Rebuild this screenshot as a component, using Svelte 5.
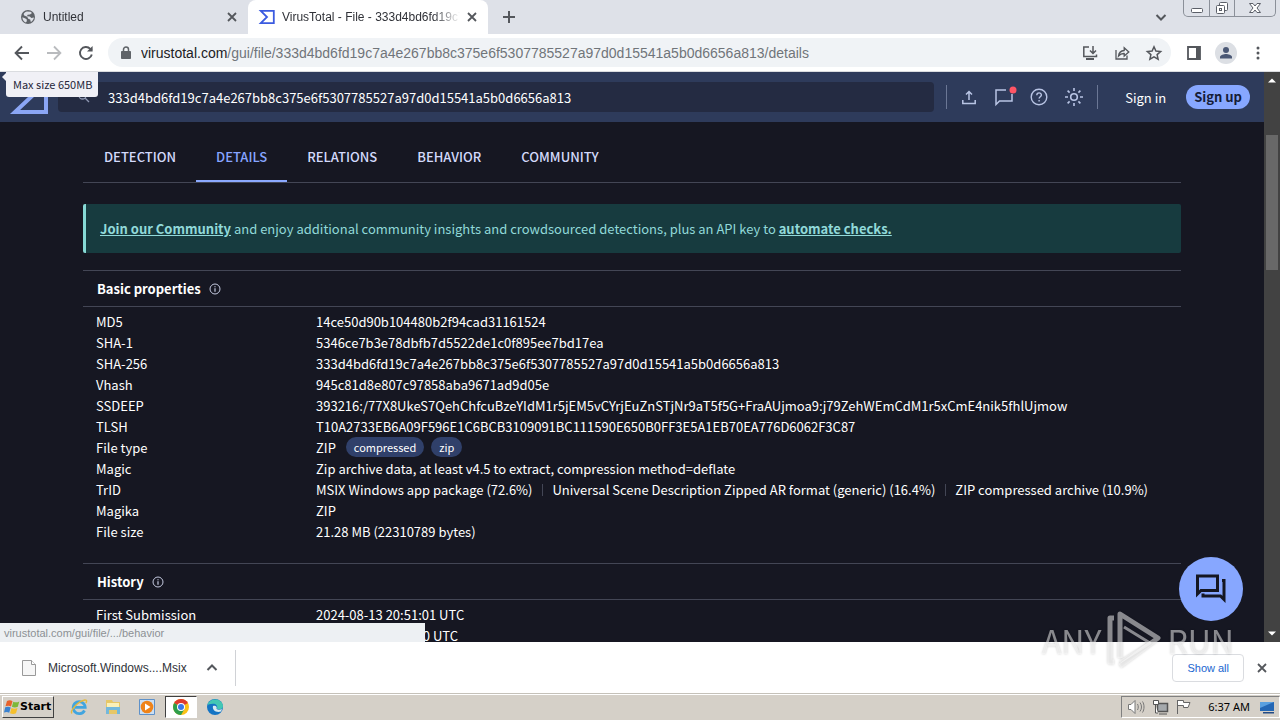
<script lang="ts">
    interface Property {
        label: string
        value?: string
        tags?: string[]
        parts?: string[]
    }

    const hash = '333d4bd6fd19c7a4e267bb8c375e6f5307785527a97d0d15541a5b0d6656a813'
    const sections = ['Detection', 'Details', 'Relations', 'Behavior', 'Community']

    const basic: Property[] = [
        { label: 'MD5', value: '14ce50d90b104480b2f94cad31161524' },
        { label: 'SHA-1', value: '5346ce7b3e78dbfb7d5522de1c0f895ee7bd17ea' },
        { label: 'SHA-256', value: hash },
        { label: 'Vhash', value: '945c81d8e807c97858aba9671ad9d05e' },
        {
            label: 'SSDEEP',
            value: '393216:/77X8UkeS7QehChfcuBzeYIdM1r5jEM5vCYrjEuZnSTjNr9aT5f5G+FraAUjmoa9:j79ZehWEmCdM1r5xCmE4nik5fhlUjmow',
        },
        { label: 'TLSH', value: 'T10A2733EB6A09F596E1C6BCB3109091BC111590E650B0FF3E5A1EB70EA776D6062F3C87' },
        { label: 'File type', value: 'ZIP', tags: ['compressed', 'zip'] },
        { label: 'Magic', value: 'Zip archive data, at least v4.5 to extract, compression method=deflate' },
        {
            label: 'TrID',
            parts: [
                'MSIX Windows app package (72.6%)',
                'Universal Scene Description Zipped AR format (generic) (16.4%)',
                'ZIP compressed archive (10.9%)',
            ],
        },
        { label: 'Magika', value: 'ZIP' },
        { label: 'File size', value: '21.28 MB (22310789 bytes)' },
    ]

    let active = $state('Details')
    let query = $state(hash)
</script>

{#snippet cross()}
    <svg width="10" height="10" viewBox="0 0 10 10" fill="none" stroke="currentColor" stroke-width="1.8">
        <path d="M1 1l8 8M9 1l-8 8" />
    </svg>
{/snippet}

{#snippet info()}
    <svg width="12" height="12" viewBox="0 0 12 12" fill="none" stroke="#c5cae0">
        <circle cx="6" cy="6" r="5" />
        <path d="M6 5.2v3.5M6 3.2v1.1" stroke-width="1.2" />
    </svg>
{/snippet}

<div class="window">
    <div class="tabstrip">
        <div class="tab">
            <svg width="16" height="16" viewBox="0 0 16 16">
                <circle cx="8" cy="8" r="7" fill="#5f6368" />
                <path d="M2.4 8.2l3 1.2 1.4 1v1.8l-1 1.4C3.8 12.7 2.3 10.6 2.4 8.2zM7 2.5l3.5.2 1.500 1.300-2 1.600-2.400.2-.6 1.500 2.800.2 1.600 1.500 2.600-.6c-.3 1.800-1.500 3.600-3.200 4.500l-.6-2.300-2-.8-1-2-3-1.200-.6-1.600C4.500 3.500 5.600 2.800 7 2.500z" fill="#dee1e8" />
            </svg>
            <span class="tab__title">Untitled</span>
            <button class="icon" aria-label="Close tab">{@render cross()}</button>
        </div>
        <div class="tab tab--active">
            <svg width="16" height="16" viewBox="0 0 16 16" fill="none" stroke="#3b5be0" stroke-width="1.8">
                <path d="M1.8 1.9h13v12.2h-13L8 8z" />
            </svg>
            <span class="tab__title">VirusTotal - File - 333d4bd6fd19c7a4</span>
            <button class="icon" aria-label="Close tab">{@render cross()}</button>
        </div>
        <button class="icon new-tab" aria-label="New tab">
            <svg width="14" height="14" viewBox="0 0 14 14" stroke="currentColor" stroke-width="2">
                <path d="M7 1v12M1 7h12" />
            </svg>
        </button>
        <button class="icon search-tabs" aria-label="Search tabs">
            <svg width="12" height="12" viewBox="0 0 12 12" fill="none" stroke="currentColor" stroke-width="2">
                <path d="M1.5 4L6 8.5 10.5 4" />
            </svg>
        </button>
        <div class="controls">
            <button aria-label="Minimize">
                <svg width="14" height="14" viewBox="0 0 14 14" fill="#fff" stroke="#5b5f68"><rect x="1.5" y="7.5" width="11" height="4" rx="1" /></svg>
            </button>
            <button aria-label="Restore">
                <svg width="14" height="14" viewBox="0 0 14 14" fill="#fff" stroke="#5b5f68"><rect x="4.5" y="1.5" width="8" height="8" rx="1" /><rect x="1.5" y="4.5" width="8" height="8" rx="1" /><rect x="4.5" y="7.5" width="2" height="2" /></svg>
            </button>
            <button class="controls__close" aria-label="Close">
                <svg width="14" height="14" viewBox="0 0 14 14" fill="#fff" stroke="#5b5f68"><path d="M1.5 2.500H5L7 5l2-2.500h3.500L9 7l3.500 4.500H9L7 9l-2 2.500H1.500L5 7z" /></svg>
            </button>
        </div>
    </div>

    <div class="toolbar">
        <button class="icon" aria-label="Back">
            <svg width="16" height="16" viewBox="0 0 16 16" fill="none" stroke="currentColor" stroke-width="1.9"><path d="M15 8H2M8 1.5L1.6 8 8 14.5" /></svg>
        </button>
        <button class="icon icon--off" aria-label="Forward">
            <svg width="16" height="16" viewBox="0 0 16 16" fill="none" stroke="currentColor" stroke-width="1.8"><path d="M1 8h13M8 1.5L14.4 8 8 14.5" /></svg>
        </button>
        <button class="icon" aria-label="Reload">
            <svg width="16" height="16" viewBox="0 0 16 16" fill="none" stroke="currentColor" stroke-width="1.9"><path d="M13.8 9.5A6 6 0 1 1 12.3 3.8l1.5 1.5" /><path d="M14.6 1v5.5H9z" fill="currentColor" stroke="none" /></svg>
        </button>
        <div class="omnibox">
            <svg width="12" height="14" viewBox="0 0 12 14"><path d="M1.5 5.5h9v7h-9z" fill="#5f6368" stroke="#5f6368" stroke-linejoin="round" /><path d="M3.5 6V3.500a2.500 2.500 0 0 1 5 0V6" fill="none" stroke="#5f6368" stroke-width="1.5" /></svg>
            <span class="omnibox__url"><b>virustotal.com</b>/gui/file/{hash}/details</span>
            <button class="icon" aria-label="Install">
                <svg width="16" height="16" viewBox="0 0 16 16" fill="none" stroke="currentColor" stroke-width="1.5"><path d="M7 2H1.8v9.5h12.7V9.5M11 1v7M8 5.5l3 3 3-3" /><path d="M4 14h8" stroke-width="2" /></svg>
            </button>
            <button class="icon" aria-label="Share">
                <svg width="16" height="16" viewBox="0 0 16 16" fill="none" stroke="currentColor" stroke-width="1.3"><path d="M2 5v9h11v-3.5" /><path d="M4.500 11c.4-3.400 2.300-5.200 5.700-5.500V2.800L14.800 7l-4.600 4V8.500C7.800 8.400 6 9.200 4.500 11z" /></svg>
            </button>
            <button class="icon" aria-label="Bookmark">
                <svg width="16" height="16" viewBox="0 0 16 16" fill="none" stroke="currentColor" stroke-width="1.5"><path d="M8 1.8l1.9 4.3 4.7.4-3.5 3.1 1 4.6L8 11.8l-4.100 2.400 1-4.600L1.400 6.500l4.700-.4z" /></svg>
            </button>
        </div>
        <div class="toolbar__end">
            <button class="icon" aria-label="Side panel">
                <svg width="16" height="16" viewBox="0 0 16 16"><path d="M2 2h12v12H2z" fill="none" stroke="currentColor" stroke-width="1.8" /><path d="M10 2h4v12h-4z" fill="currentColor" /></svg>
            </button>
            <button class="icon" aria-label="Profile">
                <svg width="22" height="22" viewBox="0 0 22 22"><circle cx="11" cy="11" r="11" fill="#dcdfe4" /><circle cx="11" cy="8" r="3" fill="#4b5875" /><path d="M5 16.5v-1.500c0-2 4-3 6-3s6 1 6 3v1.500z" fill="#4b5875" /></svg>
            </button>
            <button class="icon" aria-label="Menu">
                <svg width="16" height="16" viewBox="0 0 16 16" fill="currentColor"><circle cx="8" cy="3" r="1.5" /><circle cx="8" cy="8" r="1.5" /><circle cx="8" cy="13" r="1.5" /></svg>
            </button>
        </div>
    </div>

    <div class="viewport">
        <div class="page">
            <header class="header">
                <a class="logo" href="/" aria-label="VirusTotal">
                    <svg width="40" height="34" viewBox="0 0 40 34" fill="none" stroke="#8ba6f5" stroke-width="4"><path d="M6 2h31v30H6l16-15z" /></svg>
                </a>
                <div class="search">
                    <svg width="12" height="12" viewBox="0 0 12 12" fill="none" stroke="#8f98b3" stroke-width="1.3"><circle cx="4.5" cy="4.5" r="3.5" /><path d="M7 7l4 4" /></svg>
                    <input type="text" aria-label="Search" bind:value={query} />
                </div>
                <div class="actions">
                    <button class="icon" aria-label="Upload">
                        <svg width="20" height="20" viewBox="0 0 20 20" fill="none" stroke="currentColor" stroke-width="1.5"><path d="M10 13V5M7 7.500L10 4.500 13 7.500M3.800 13v3.500h12.400V13" /></svg>
                    </button>
                    <button class="icon" aria-label="Notifications">
                        <svg width="20" height="20" viewBox="0 0 20 20" fill="none" stroke="currentColor" stroke-width="1.5"><path d="M12 3H2v14.500L5.500 14H18V7" /><circle cx="19" cy="3" r="3.5" fill="#ff5565" stroke="none" /></svg>
                    </button>
                    <button class="icon" aria-label="Help">
                        <svg width="20" height="20" viewBox="0 0 20 20" fill="none" stroke="currentColor" stroke-width="1.4"><circle cx="10" cy="10" r="7.8" /><path d="M7.800 8.200c0-3 4.600-3 4.600-.2 0 1.700-2.300 1.800-2.300 3.500M10.100 13v1.500" /></svg>
                    </button>
                    <button class="icon" aria-label="Theme">
                        <svg width="20" height="20" viewBox="0 0 20 20" fill="none" stroke="currentColor" stroke-width="1.6"><circle cx="10" cy="10" r="3.3" /><path d="M10 1v3M10 16v3M1 10h3M16 10h3M3.600 3.600l2 2M14.400 14.400l2 2M16.400 3.600l-2 2M5.600 14.400l-2 2" /></svg>
                    </button>
                </div>
                <a class="sign-in" href="/sign-in">Sign in</a>
                <a class="sign-up" href="/sign-up">Sign up</a>
            </header>

            <main class="content">
                <nav class="sections">
                    {#each sections as section}
                        <button class="section" class:section--active={section === active} onclick={() => (active = section)}>
                            {section}
                        </button>
                    {/each}
                </nav>

                <p class="banner">
                    <a href="/join">Join our Community</a> and enjoy additional community insights and crowdsourced detections, plus an API key to
                    <a href="/api">automate checks.</a>
                </p>

                <section class="card">
                    <h2>Basic properties {@render info()}</h2>
                    <table>
                        <tbody>
                            {#each basic as row}
                                <tr>
                                    <th scope="row">{row.label}</th>
                                    <td>
                                        {row.value ?? ''}
                                        {#each row.tags ?? [] as tag}<span class="tag">{tag}</span>{/each}
                                        {#each row.parts ?? [] as part}<span class="part">{part}</span>{/each}
                                    </td>
                                </tr>
                            {/each}
                        </tbody>
                    </table>
                </section>

                <section class="card">
                    <h2>History {@render info()}</h2>
                    <table>
                        <tbody>
                            <tr>
                                <th scope="row">First Submission</th>
                                <td>2024-08-13 20:51:01 UTC</td>
                            </tr>
                            <tr>
                                <th></th>
                                <td><span class="tail">0 UTC</span></td>
                            </tr>
                        </tbody>
                    </table>
                </section>
            </main>
        </div>

        <div class="scrollbar">
            <svg width="16" height="16" viewBox="0 0 16 16" fill="#fff"><path d="M4 10.5L8 6.500l4 4z" /></svg>
            <div class="scrollbar__track"><div class="scrollbar__thumb"></div></div>
            <svg width="16" height="16" viewBox="0 0 16 16" fill="#fff"><path d="M4 5.500L8 9.500l4-4z" /></svg>
        </div>

        <div class="tooltip">Max size 650MB</div>
        <div class="status">virustotal.com/gui/file/.../behavior</div>
        <button class="chat" aria-label="Chat">
            <svg width="32" height="32" viewBox="0 0 32 32" fill="none" stroke="#151722" stroke-width="3"><path d="M2.5 3h20v14.500H6L2.500 21z" /><path d="M27 7.500h2v19L25.500 23H8v-2.500" /></svg>
        </button>
    </div>

    <div class="downloads">
        <button class="download">
            <svg width="14" height="18" viewBox="0 0 14 18" fill="#f6f6f6" stroke="#999"><path d="M.5 1.5h9l4 4v11H.5z" /><path d="M9.5 1.5v4h4" fill="#fff" /></svg>
            <span>Microsoft.Windows....Msix</span>
        </button>
        <button class="icon download-menu" aria-label="Download options">
            <svg width="12" height="12" viewBox="0 0 12 12" fill="none" stroke="currentColor" stroke-width="2"><path d="M1.5 8L6 3.5 10.5 8" /></svg>
        </button>
        <button class="show-all">Show all</button>
        <button class="icon" aria-label="Close downloads">{@render cross()}</button>
    </div>

    <div class="taskbar">
        <button class="start">
            <svg width="16" height="16" viewBox="0 0 16 16"><path d="M3 2c2-1 4-.8 5.500.2L7 7.500C5.500 6.500 3.500 6.500 1.500 7.300z" fill="#e8622c" /><path d="M9.300 2.700c2 1 4 .8 6-.2l-1.500 5.300c-2 1-4 .9-5.900 0z" fill="#7db83a" /><path d="M1.200 8.300c2-.8 4-.8 5.500.2l-1.500 5.300c-1.500-1-3.400-1-5.200-.2z" fill="#3b82d0" /><path d="M7.500 9c2 1 4 .9 6 0L12 14.200c-2 1-4 .8-6 0z" fill="#f5bf2c" /></svg>
            Start
        </button>
        <div class="launchers">
            <button aria-label="Internet Explorer">
                <svg width="18" height="18" viewBox="0 0 18 18" fill="none"><path d="M14.5 12.5a6 6 0 1 1 .7-3.200H5" stroke="#42a5df" stroke-width="2.8" /><path d="M2 15.500C-.5 13 8 3 15 2c2.500 0 1.500 2 .8 3" stroke="#e5b93c" stroke-width="1.4" /></svg>
            </button>
            <button aria-label="Explorer">
                <svg width="18" height="18" viewBox="0 0 18 18"><path d="M2 2h6l1 2h7v12H2z" fill="#e6c768" /><path d="M3 5h12v5H3z" fill="#faf0b8" /><path d="M2 9h14v7h-3v-4H5v4H2z" fill="#73b8dc" /></svg>
            </button>
            <button aria-label="Media Player">
                <svg width="18" height="18" viewBox="0 0 18 18"><path d="M1.5 1.5h15v15h-15z" fill="#cbdff3" stroke="#5e91c9" /><circle cx="9" cy="9" r="6.3" fill="#ef8318" /><path d="M7 5.500L12.500 9 7 12.500z" fill="#fff" /></svg>
            </button>
            <button class="launchers__active" aria-label="Chrome">
                <svg width="18" height="18" viewBox="0 0 18 18"><circle cx="9" cy="9" r="8" fill="#fbc116" /><path d="M9 9L2.100 5A8 8 0 0 1 15.900 5z" fill="#df3b2e" /><path d="M9 9L2.100 5A8 8 0 0 0 9 17l3.500-6z" fill="#2f9e4b" /><circle cx="9" cy="9" r="4" fill="#fff" /><circle cx="9" cy="9" r="3" fill="#3b78e7" /></svg>
            </button>
            <button aria-label="Edge">
                <svg width="18" height="18" viewBox="0 0 18 18"><circle cx="9" cy="9" r="8" fill="#1474c4" /><path d="M1.500 7C3 0 15-1 17 7.500c.4 4-4 4.500-6 3.200 1-3-1-5-4-5S2 6.500 1.500 7z" fill="#43c7b4" /><path d="M7 8c-1 4 3 7 8 5.500l1-2.500c-2 1-4.500.8-5.500-.3.800-1.700-.5-3.700-3.500-2.700z" fill="#d9eaf0" /></svg>
            </button>
        </div>
        <div class="tray">
            <svg width="18" height="18" viewBox="0 0 18 18" fill="#fff" stroke="#777"><path d="M1.5 6.5H4l4-4v13l-4-4H1.500z" /><path d="M10.500 6c1 2 1 4 0 6M13 4.500c2 3 2 6 0 9M15.500 3.500c2 3 2 8 0 11" fill="none" /></svg>
            <svg width="18" height="18" viewBox="0 0 18 18" fill="#fff" stroke="#555"><path d="M6.5 5.5h10v8h-10z" fill="#a5a9ac" stroke-width="1.5" /><path d="M8 16h8M2.500 2.500h5v4h-5zM4.500 7v8H7" /></svg>
            <svg width="18" height="18" viewBox="0 0 18 18" fill="#fff" stroke="#666"><path d="M2.5 2v14M2.500 2.500h6v2h6.500l-2 5H8.500v-2h-6z" /></svg>
            <time>6:37 AM</time>
            <svg width="16" height="16" viewBox="0 0 16 16"><path d="M1 3h14v9H1z" fill="#2467b5" /><path d="M1 3h14L1 9z" fill="#5aa0e0" /><path d="M4 13h11v1.500H4z" fill="#234b85" /></svg>
        </div>
    </div>

    <div class="watermark" aria-hidden="true">
        <span>ANY</span>
        <svg width="56" height="60" viewBox="0 0 56 60" fill="none" stroke="currentColor" stroke-width="5" stroke-linejoin="round"><path d="M8 8H4v44h4M14 48V4l38 24-38 28" /><path d="M18 17l26 16-30 19" stroke-width="3" /></svg>
        <span>RUN</span>
    </div>
</div>

<style>
    :global(body) {
        margin: 0;
    }

    .window {
        --sans: 'Noto Sans CJK SC', 'Noto Sans', sans-serif;
        --line: #434655;
        position: relative;
        display: flex;
        flex-direction: column;
        height: 100vh;
        overflow: hidden;
        font: 12px/16px 'Liberation Sans', sans-serif;
        color: #303238;
    }

    button {
        padding: 0;
        border: 0;
        background: none;
        font: inherit;
        color: inherit;
    }

    a {
        color: inherit;
        text-decoration: none;
    }

    svg {
        display: block;
        flex: none;
        overflow: visible;
    }

    .icon {
        display: flex;
        flex: none;
        color: #54575c;
    }

    .icon--off {
        color: #b9bbbe;
    }

    .tabstrip {
        display: flex;
        flex: none;
        height: 34px;
        align-items: center;
        background: #dee1e8;
    }

    .tab {
        display: flex;
        box-sizing: border-box;
        width: 240px;
        height: 34px;
        padding: 0 11px;
        align-items: center;
        gap: 7px;
    }

    .tab:first-child {
        width: 248px;
        padding-left: 20px;
    }

    .tab--active {
        border-radius: 8px 8px 0 0;
        background: #fff;
    }

    .tab__title {
        flex: 1;
        overflow: hidden;
        white-space: nowrap;
        mask-image: linear-gradient(to right, #000 85%, transparent);
    }

    .new-tab {
        margin-left: 14px;
    }

    .search-tabs {
        margin: 0 16px 0 auto;
    }

    .controls {
        display: flex;
        align-self: flex-start;
        height: 16px;
        margin-right: 4px;
        border: 1px solid #8b9099;
        border-top: 0;
        border-radius: 0 0 5px 5px;
    }

    .controls button {
        display: flex;
        width: 25px;
        align-items: center;
        justify-content: center;
    }

    .controls button + button {
        border-left: 1px solid #8b9099;
    }

    .controls .controls__close {
        width: 41px;
    }

    .toolbar {
        display: flex;
        box-sizing: border-box;
        flex: none;
        height: 38px;
        padding: 0 14px;
        align-items: center;
        gap: 16px;
        border-bottom: 1px solid #dadce0;
        background: #fff;
    }

    .toolbar__end {
        display: flex;
        align-items: center;
        gap: 13px;
    }

    .omnibox {
        display: flex;
        flex: 1;
        height: 29px;
        min-width: 0;
        margin: 0 -1px 0 -2px;
        padding: 0 9px 0 12px;
        align-items: center;
        gap: 16px;
        border-radius: 15px;
        background: #f0f3f6;
    }

    .omnibox__url {
        flex: 1;
        overflow: hidden;
        margin-left: -7px;
        font-size: 14px;
        line-height: 20px;
        white-space: nowrap;
        color: #70757a;
    }

    .omnibox__url b {
        font-weight: 400;
        color: #202124;
    }

    .viewport {
        position: relative;
        display: flex;
        flex: 1;
        min-height: 0;
        background: #161722;
        font: 13px/21px var(--sans);
        color: #fff;
    }

    .page {
        flex: 1;
        overflow: hidden;
    }

    .header {
        display: flex;
        height: 50px;
        padding-right: 14px;
        align-items: center;
        background: #2e3b5b;
    }

    .logo {
        width: 49px;
        padding-left: 9px;
    }

    .search {
        display: flex;
        flex: 1;
        height: 30px;
        padding-left: 20px;
        align-items: center;
        gap: 18px;
        border-radius: 4px;
        background: #242b42;
    }

    .search input {
        flex: 1;
        padding: 0;
        border: 0;
        outline: 0;
        background: none;
        font: inherit;
        color: inherit;
    }

    .actions {
        display: flex;
        height: 24px;
        margin-left: 12px;
        padding: 0 13px 0 12px;
        align-items: center;
        gap: 15px;
        border: 1px solid #6b7795;
        border-width: 0 1px;
    }

    .actions .icon {
        color: #b9c5e5;
    }

    .sign-in {
        margin: 0 20px 0 27px;
    }

    .sign-up {
        padding: 0 8px;
        border-radius: 12px;
        background: #87a7ff;
        font-weight: 700;
        line-height: 24px;
        color: #151d38;
    }

    .content {
        padding: 0 83px;
    }

    .sections {
        display: flex;
        height: 60px;
        margin-bottom: 21px;
        border-bottom: 1px solid var(--line);
    }

    .section {
        padding: 10px 20px 0;
        border-bottom: 2px solid transparent;
        font-weight: 500;
        text-transform: uppercase;
        color: #d3dafb;
    }

    .section:first-child {
        padding-left: 21px;
    }

    .section--active {
        border-color: #8ba9ff;
        color: #87a5ff;
    }

    .banner {
        margin: 0 0 17px;
        padding: 14px;
        border-left: 3px solid #86d9d5;
        border-radius: 2px;
        background: #173b3f;
        color: #91d9d9;
    }

    .banner a {
        font-weight: 700;
        text-decoration: underline;
    }

    .card {
        margin-bottom: 21px;
    }

    h2 {
        display: flex;
        margin: 0;
        padding: 7px 14px;
        align-items: center;
        gap: 8px;
        border: 1px solid var(--line);
        border-width: 1px 0;
        font: 700 13px/21px var(--sans);
    }

    table {
        width: 100%;
        padding: 4px 13px 0;
        border-spacing: 0;
        table-layout: fixed;
    }

    th,
    td {
        height: 21px;
        padding: 0;
        font-weight: 400;
        text-align: left;
        white-space: nowrap;
    }

    th {
        width: 220px;
    }

    .tag {
        display: inline-block;
        height: 20px;
        margin-left: 7px;
        padding: 0 8px;
        border-radius: 10px;
        background: #30406a;
        font-size: 11px;
        line-height: 20px;
        vertical-align: top;
    }

    .part + .part {
        margin-left: 10px;
        padding-left: 10px;
        background: linear-gradient(#434655, #434655) left center / 1px 12px no-repeat;
    }

    .tail {
        display: inline-block;
        width: 142px;
        text-align: right;
    }

    .scrollbar {
        display: flex;
        flex-direction: column;
        background: #424242;
    }

    .scrollbar__track {
        flex: 1;
        padding: 47px 2px 0;
    }

    .scrollbar__thumb {
        height: 135px;
        background: #686868;
    }

    .tooltip {
        position: absolute;
        top: 0;
        left: 6px;
        padding: 2px 6px 3px 7px;
        border-radius: 0 0 3px 3px;
        background: #f0f0f6;
        font-size: 11px;
        line-height: 20px;
        color: #25263a;
    }

    .tooltip::before {
        content: '';
        position: absolute;
        top: 1px;
        left: -4px;
        border: 4px solid transparent;
        border-right-color: #f0f0f6;
        border-left: 0;
    }

    .status {
        position: absolute;
        bottom: 0;
        left: 0;
        box-sizing: border-box;
        width: 425px;
        padding: 2px 4px 1px;
        background: #edf0f3;
        font: 11px/16px 'Liberation Sans', sans-serif;
        color: #8c9095;
    }

    .chat {
        position: absolute;
        right: 37px;
        bottom: 21px;
        display: flex;
        width: 64px;
        height: 64px;
        align-items: center;
        justify-content: center;
        border-radius: 50%;
        background: #87a7ff;
    }

    .downloads {
        display: flex;
        flex: none;
        height: 51px;
        padding: 0 13px 0 22px;
        align-items: center;
        background: #fff;
    }

    .download {
        display: flex;
        align-items: center;
        gap: 12px;
    }

    .download-menu {
        height: 36px;
        margin-left: 19px;
        padding-right: 17px;
        align-items: center;
        border-right: 1px solid #d0d2d6;
    }

    .show-all {
        margin: 0 13px 0 auto;
        padding: 5px 14px;
        border: 1px solid #dadce0;
        border-radius: 4px;
        font-size: 11px;
        color: #1a66d0;
    }

    .taskbar {
        display: flex;
        box-sizing: border-box;
        flex: none;
        height: 27px;
        padding: 1px 0 2px 2px;
        align-items: center;
        border-top: 1px solid #c5c1b9;
        box-shadow: inset 0 1px #fff;
        background: #d5d0c8;
        color: #000;
    }

    .start {
        display: flex;
        box-sizing: border-box;
        height: 22px;
        padding: 0 2px 0 1px;
        align-items: center;
        border: 1px solid;
        border-color: #fff #404040 #404040 #fff;
        font: 700 11px/16px 'DejaVu Sans', sans-serif;
    }

    .launchers {
        display: flex;
        margin-left: 9px;
        gap: 2px;
    }

    .launchers button {
        display: flex;
        width: 32px;
        height: 22px;
        align-items: center;
        justify-content: center;
    }

    .launchers .launchers__active {
        box-sizing: border-box;
        border: 1px solid;
        border-color: #404040 #fff #fff #404040;
        background: #fff;
    }

    .tray {
        display: flex;
        box-sizing: border-box;
        height: 22px;
        margin-left: auto;
        padding: 0 4px 0 5px;
        align-items: center;
        gap: 6px;
        border: 1px solid;
        border-color: #808080 #fff #fff #808080;
    }

    .tray time {
        margin: 0 3px 0 9px;
        font: 11px/16px 'Noto Sans', sans-serif;
    }

    .watermark {
        position: absolute;
        right: 46px;
        bottom: 50px;
        display: flex;
        align-items: center;
        gap: 5px;
        font: 32px/60px var(--sans);
        color: #ffffff80;
        filter: drop-shadow(0 0 1px #00000060);
        pointer-events: none;
    }
</style>
